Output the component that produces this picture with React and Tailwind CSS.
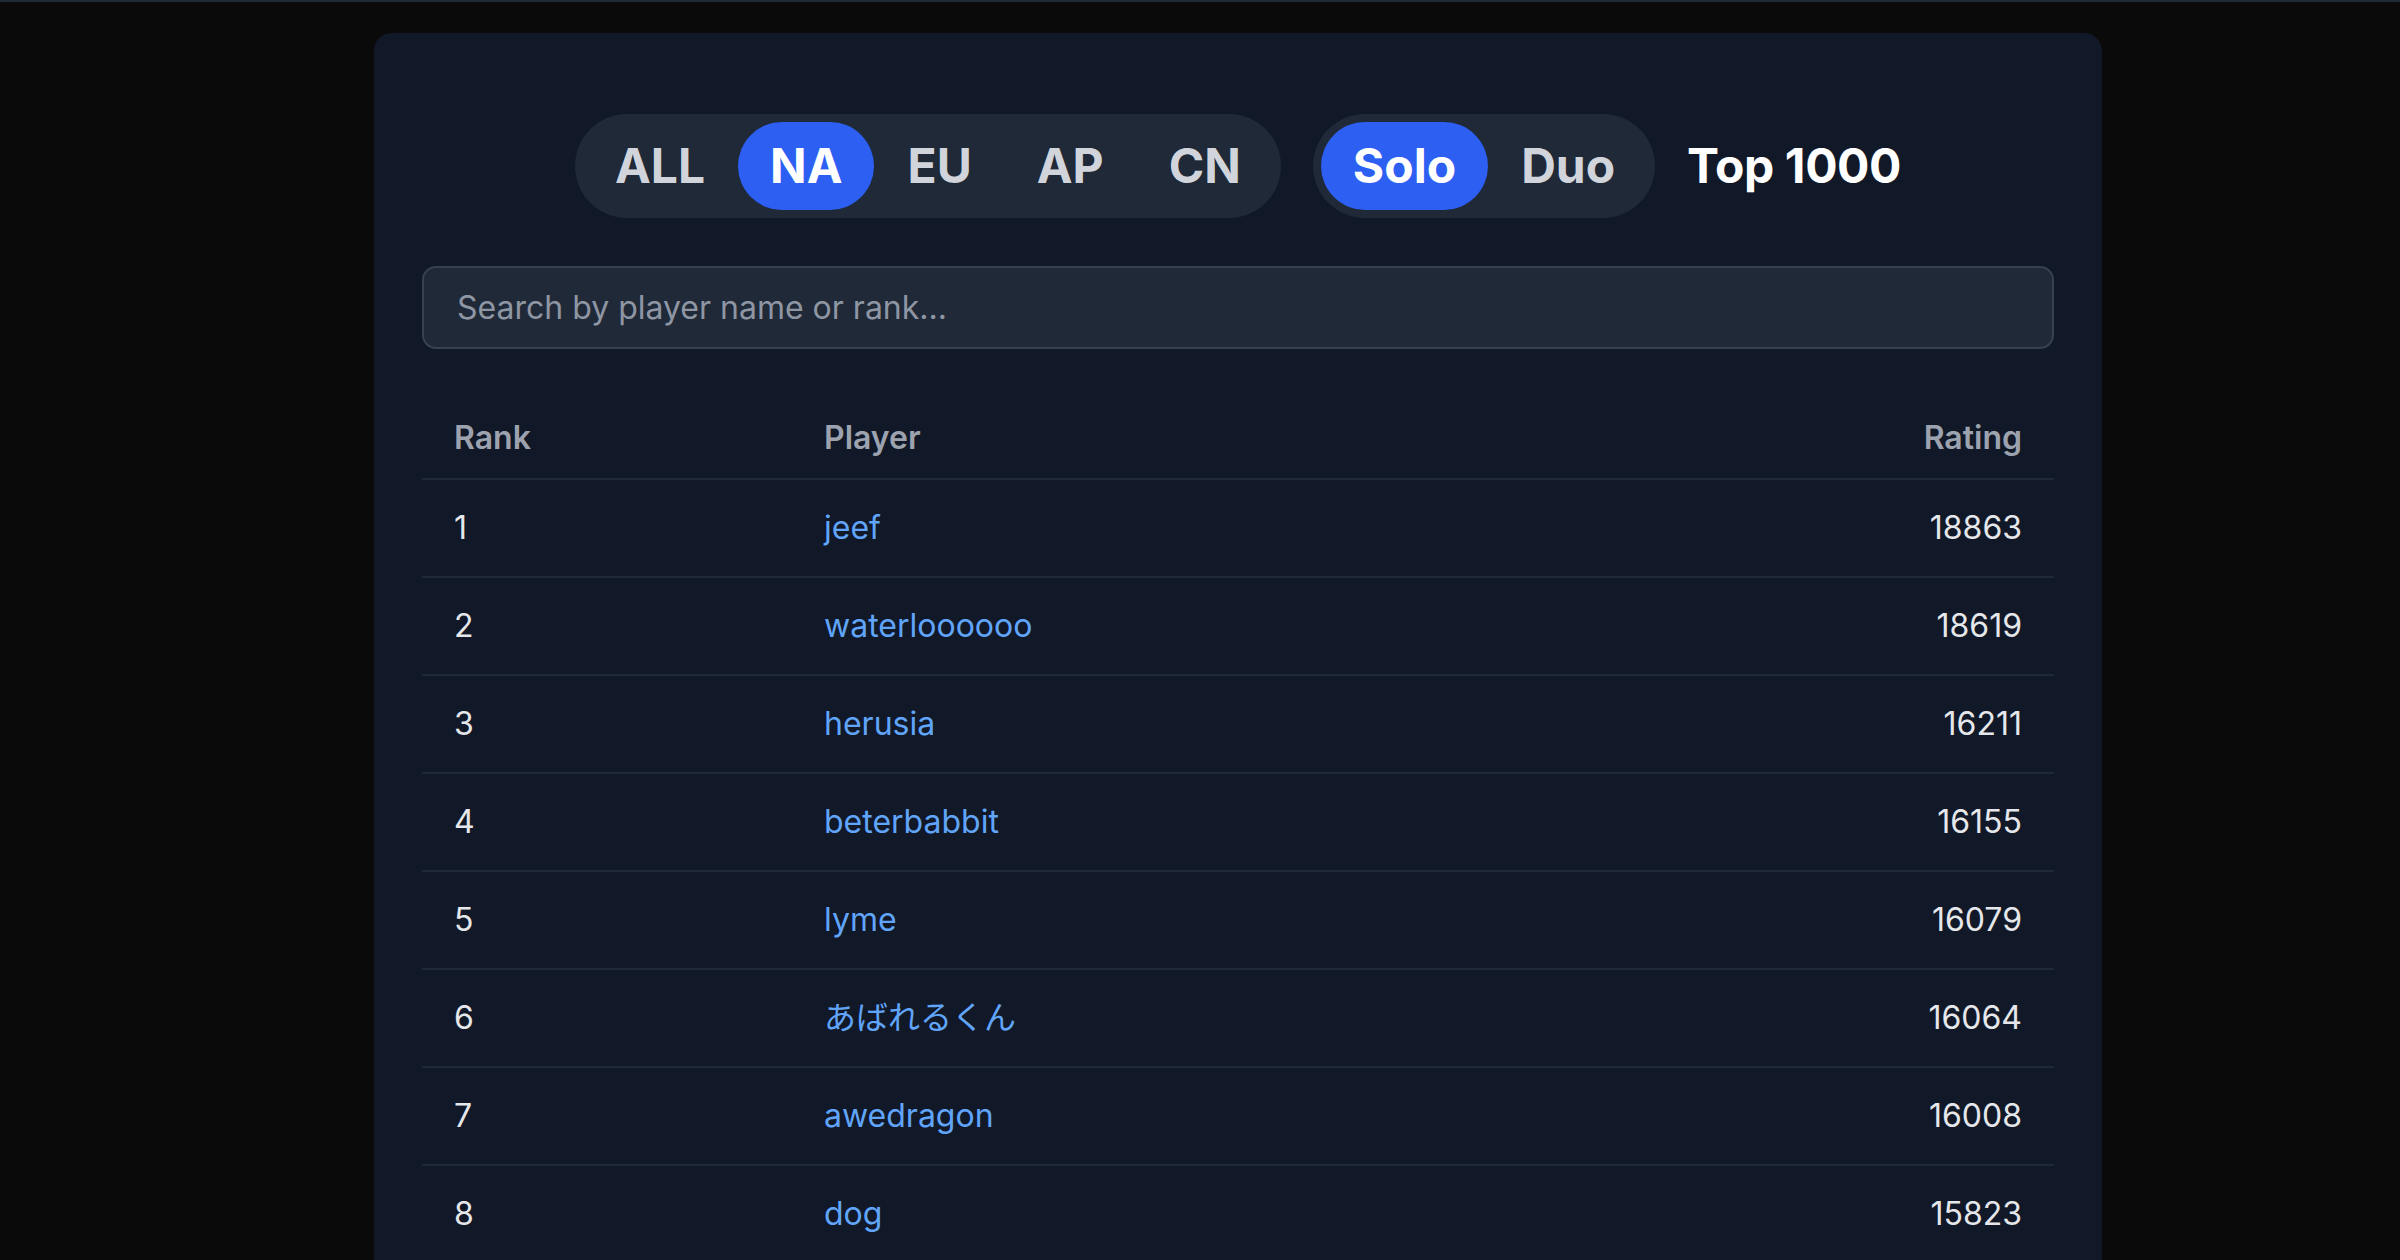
import React, { useState } from 'react';

const REGIONS = ['ALL', 'NA', 'EU', 'AP', 'CN'];
const MODES = ['Solo', 'Duo'];

const PLAYERS = [
  { rank: 1, name: 'jeef', rating: 18863 },
  { rank: 2, name: 'waterloooooo', rating: 18619 },
  { rank: 3, name: 'herusia', rating: 16211 },
  { rank: 4, name: 'beterbabbit', rating: 16155 },
  { rank: 5, name: 'lyme', rating: 16079 },
  { rank: 6, name: 'あばれるくん', rating: 16064 },
  { rank: 7, name: 'awedragon', rating: 16008 },
  { rank: 8, name: 'dog', rating: 15823 },
  { rank: 9, name: 'Zorlan', rating: 15790 },
  { rank: 10, name: 'kripp', rating: 15702 },
];

export default function App() {
  const [region, setRegion] = useState('NA');
  const [mode, setMode] = useState('Solo');
  const [query, setQuery] = useState('');

  const q = query.trim().toLowerCase();
  const rows = PLAYERS.filter(
    (p) => !q || p.name.toLowerCase().includes(q) || String(p.rank) === q
  );

  return (
    <div className="min-h-screen bg-[#0a0a0a] font-['Inter','Noto_Sans_CJK_JP',sans-serif]">
      <div className="h-[2px] bg-[#1f2937]" />

      <div className="pl-[374px] pt-[31px]">
        <div className="w-[1728px] rounded-[18px] bg-[#111827] px-[48px] pt-[81px] pb-[48px]">
          {/* Filters */}
          <div className="flex items-center justify-center gap-[32px]">
            <div className="flex gap-[1px] rounded-full bg-[#1f2937] p-[8px]">
              {REGIONS.map((r) => (
                <button
                  key={r}
                  onClick={() => setRegion(r)}
                  className={
                    r === region
                      ? 'h-[88px] rounded-full bg-[#2d5ff3] px-[32px] text-[48px] font-bold text-white'
                      : 'h-[88px] rounded-full px-[32px] text-[48px] font-bold text-[#d1d5db]'
                  }
                >
                  {r}
                </button>
              ))}
            </div>

            <div className="flex gap-[1px] rounded-full bg-[#1f2937] p-[8px]">
              {MODES.map((m) => (
                <button
                  key={m}
                  onClick={() => setMode(m)}
                  className={
                    m === mode
                      ? 'h-[88px] rounded-full bg-[#2d5ff3] px-[32px] text-[48px] font-bold text-white'
                      : 'h-[88px] rounded-full px-[32px] text-[48px] font-bold text-[#d1d5db]'
                  }
                >
                  {m}
                </button>
              ))}
            </div>

            <span className="text-[48px] font-bold tracking-[-0.4px] text-white">Top 1000</span>
          </div>

          {/* Search */}
          <input
            value={query}
            onChange={(e) => setQuery(e.target.value)}
            placeholder="Search by player name or rank..."
            className="mt-[48px] block h-[83px] w-full rounded-[14px] border-2 border-[#374151] bg-[#1f2937] px-[33px] text-[32px] text-[#e5e7eb] outline-none placeholder:text-[#8f96a3]"
          />

          {/* Table */}
          <div className="mt-[49px] text-[32px]">
            <div className="flex h-[82px] items-center border-b-2 border-[#1f2937] font-semibold text-[#9ca3af]">
              <div className="w-[370px] px-[32px]">Rank</div>
              <div className="flex-1 px-[32px]">Player</div>
              <div className="px-[32px] text-right">Rating</div>
            </div>
            {rows.map((p) => (
              <div
                key={p.rank}
                className="flex h-[98px] items-center border-b-2 border-[#1f2937]"
              >
                <div className="w-[370px] px-[32px] text-[#e5e7eb]">{p.rank}</div>
                <div className="flex-1 px-[32px]">
                  <a href="#" className="text-[#60a5fa] hover:underline">
                    {p.name}
                  </a>
                </div>
                <div className="px-[32px] text-right text-[#e5e7eb]">{p.rating}</div>
              </div>
            ))}
          </div>
        </div>
      </div>
    </div>
  );
}
